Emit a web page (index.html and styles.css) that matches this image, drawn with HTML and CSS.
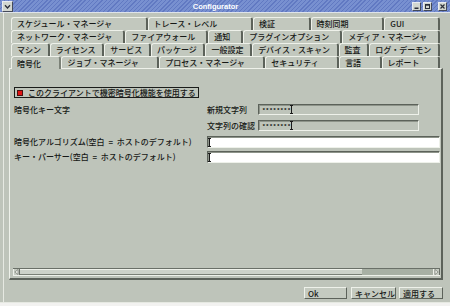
FILE: index.html
```html
<!DOCTYPE html>
<html lang="ja">
<head>
<meta charset="utf-8">
<title>Configurator</title>
<link rel="stylesheet" href="styles.css">
</head>
<body>
<div class="window">
  <div class="titlebar">
    <span class="wbtn menu"><svg width="9" height="9" viewBox="0 0 9 9"><path d="M2 3.2 L4.5 6 L7 3.2" fill="none" stroke="#2a2e3a" stroke-width="1.3"/></svg></span>
    <span class="title">Configurator</span>
    <span class="wbtns">
      <span class="wbtn"><svg width="7" height="7" viewBox="0 0 7 7"><rect x="1.5" y="4.5" width="4" height="1.5" fill="#2a2e3a"/></svg></span>
      <span class="wbtn"><svg width="7" height="7" viewBox="0 0 7 7"><rect x="1.5" y="1.5" width="4" height="4" fill="none" stroke="#2a2e3a" stroke-width="1"/><rect x="1.5" y="1.5" width="4" height="1.2" fill="#2a2e3a"/></svg></span>
      <span class="wbtn close"><svg width="7" height="7" viewBox="0 0 7 7"><path d="M1.5 1.5 L5.5 5.5 M5.5 1.5 L1.5 5.5" stroke="#2a2e3a" stroke-width="1.2"/></svg></span>
    </span>
  </div>

  <div class="frame">
    <div class="notebook">
      <div class="tabrow">
        <div class="tab">スケジュール・マネージャ</div>
        <div class="tab">トレース・レベル</div>
        <div class="tab">検証</div>
        <div class="tab">時刻同期</div>
        <div class="tab">GUI</div>
      </div>
      <div class="tabrow">
        <div class="tab">ネットワーク・マネージャ</div>
        <div class="tab">ファイアウォール</div>
        <div class="tab">通知</div>
        <div class="tab">プラグインオプション</div>
        <div class="tab">メディア・マネージャ</div>
      </div>
      <div class="tabrow">
        <div class="tab">マシン</div>
        <div class="tab">ライセンス</div>
        <div class="tab">サービス</div>
        <div class="tab">パッケージ</div>
        <div class="tab">一般設定</div>
        <div class="tab">デバイス・スキャン</div>
        <div class="tab">監査</div>
        <div class="tab">ログ・デーモン</div>
      </div>
      <div class="tabrow last">
        <div class="tab selected">暗号化</div>
        <div class="tab">ジョブ・マネージャ</div>
        <div class="tab">プロセス・マネージャ</div>
        <div class="tab">セキュリティ</div>
        <div class="tab">言語</div>
        <div class="tab">レポート</div>
      </div>

      <div class="panel">
        <div class="form">
          <label class="check"><span class="box"></span>このクライアントで機密暗号化機能を使用する</label>

          <span class="lbl">暗号化キー文字</span>
          <span class="lbl">新規文字列</span>
          <span class="field pw"><span class="dots">********</span><i class="caret"></i></span>

          <span class="lbl col2">文字列の確認</span>
          <span class="field pw"><span class="dots">********</span><i class="caret"></i></span>

          <span class="lbl tall">暗号化アルゴリズム(空白 = ホストのデフォルト)</span>
          <span class="field text"><i class="caret"></i></span>

          <span class="lbl tall">キー・パーサー(空白 = ホストのデフォルト)</span>
          <span class="field text"><i class="caret"></i></span>
        </div>

        <div class="hscroll">
          <span class="arrow"><svg width="5" height="6" viewBox="0 0 5 6"><path d="M4 0.5 L0.8 3 L4 5.5 Z" fill="#eef1ea" stroke="#646a62" stroke-width="0.6"/></svg></span>
          <span class="thumb"></span>
          <span class="trough"></span>
          <span class="arrow"><svg width="5" height="6" viewBox="0 0 5 6"><path d="M1 0.5 L4.2 3 L1 5.5 Z" fill="#eef1ea" stroke="#646a62" stroke-width="0.6"/></svg></span>
        </div>
      </div>
    </div>

    <div class="actions">
      <button class="btn ok">Ok</button>
      <button class="btn cancel">キャンセル</button>
      <button class="btn apply">適用する</button>
    </div>
  </div>
</div>
</body>
</html>
```

FILE: styles.css
```css
html, body {
  margin: 0; padding: 0;
}

body {
  width: 450px; height: 306px;
  overflow: hidden;
  background: #f2f2f0;
  font-family: "Noto Sans CJK JP", "DejaVu Sans", sans-serif;
  font-size: 8px;
  font-weight: 500;
  color: #161816;
}

.window {
  height: 303px;
  display: flex;
  flex-direction: column;
  background: #bec4ba;
  border-bottom: 1px solid #e6e9e2;
  box-sizing: border-box;
}

/* title bar */

.titlebar {
  height: 12px;
  flex: none;
  display: flex;
  align-items: center;
  background: repeating-linear-gradient(135deg, #6179c2 0 1px, #7890d0 1px 3px);
  border-bottom: 1px solid #dfe4ea;
}

.title {
  flex: 1;
  text-align: center;
  color: #fff;
  font-family: "Liberation Sans", sans-serif;
  font-weight: bold;
  font-size: 7.5px;
  padding-left: 6px;
}

.wbtns {
  display: flex;
  gap: 2px;
  margin-right: 3px;
}

.wbtn {
  width: 7px; height: 7px;
  display: flex;
  background: #d2d6d0;
  border: 1px solid #e8ebf2;
  border-right-color: #444a5a;
  border-bottom-color: #444a5a;
}

.wbtn.menu {
  width: 9px; height: 9px;
  margin-left: 2px;
}

.wbtn.close {
  margin-left: 4px;
}

/* body frame */

.frame {
  flex: 1;
  display: flex;
  flex-direction: column;
  margin-left: 3px;
  border-left: 1px solid #e6e9e2;
  padding: 4px 7px 0 5px;
}

/* notebook tabs */

.tabrow {
  display: flex;
  height: 13px;
  margin: 0 3px 0 2px;
}

.tabrow.last {
  height: 12px;
}

.tab {
  flex: 1 1 auto;
  box-sizing: border-box;
  white-space: nowrap;
  padding: 1px 4px 0 5px;
  line-height: 10px;
  border-top: 1px solid #eef1ea;
  border-left: 1px solid #eef1ea;
  border-right: 2px solid #5c625a;
  border-radius: 3px 3px 0 0;
  background: #c2c8be;
}

.tab.selected {
  background: #bec4ba;
  border-right-color: #7c8278;
  position: relative;
  z-index: 1;
  margin-bottom: -1px;
  padding-top: 2px;
}

/* page */

.panel {
  height: 212px;
  box-sizing: border-box;
  display: flex;
  flex-direction: column;
  border-top: 1px solid #eef1ea;
  border-left: 1px solid #eef1ea;
  border-right: 2px solid #5c625a;
  border-bottom: 2px solid #5c625a;
  padding: 18px 1px 2px 2px;
}

.form {
  display: grid;
  grid-template-columns: 193px 51px 161px 21px;
  grid-template-rows: 17px 16px 16px 15px 12px;
  align-items: start;
  margin-left: 2px;
}

.check {
  grid-column: 1 / -1;
  justify-self: start;
  display: flex;
  align-items: center;
  height: 11px;
  box-sizing: border-box;
  border: 1px solid #1a1c1a;
  padding: 0 2px;
  line-height: 9px;
}

.box {
  width: 4px; height: 4px;
  background: #e01414;
  border: 1px solid #4a1010;
  margin-right: 5px;
}

.lbl {
  line-height: 11px;
  white-space: nowrap;
}

.lbl.tall {
  grid-column: 1;
  line-height: 12px;
  word-spacing: 2px;
}

.lbl.col2 {
  grid-column: 2;
}

.field {
  display: flex;
  align-items: center;
  box-sizing: border-box;
  border: 1px solid #5c625a;
  border-right-color: #eef1ea;
  border-bottom-color: #eef1ea;
  box-shadow: inset 1px 1px 0 #8e948a;
}

.field.pw {
  grid-column: 3;
  height: 11px;
  padding-left: 3px;
}

.field.text {
  grid-column: 2 / 5;
  height: 12px;
  background: #fff;
  padding-left: 1px;
}

.dots {
  font-family: "Liberation Mono", monospace;
  font-weight: bold;
  font-size: 6px;
  line-height: 7px;
  padding-top: 2px;
  color: #101210;
}

.caret {
  display: block;
  width: 1px; height: 9px;
  background: #1a1a1a;
  position: relative;
}

.caret::before,
.caret::after {
  content: "";
  position: absolute;
  left: -1px;
  width: 3px; height: 1px;
  background: #1a1a1a;
}
.caret::before { top: 0; }
.caret::after { bottom: 0; }

/* horizontal scrollbar */

.hscroll {
  margin-top: auto;
  margin-left: 1px;
  height: 8px;
  display: flex;
  box-sizing: border-box;
  border-top: 1px solid #6a7068;
  border-bottom: 1px solid #eef1ea;
  background: #a8b0a4;
}

.arrow {
  width: 7px;
  display: flex;
  align-items: center;
  justify-content: center;
  background: #c6ccc2;
  border-left: 1px solid #eef1ea;
  border-right: 1px solid #6a7068;
  box-sizing: border-box;
}

.thumb {
  width: 342px;
  background: #cdd2c9;
  border-top: 1px solid #eef1ea;
  border-bottom: 1px solid #7a8076;
  box-sizing: border-box;
}

.trough {
  flex: 1;
}

/* dialog buttons */

.actions {
  display: flex;
  justify-content: flex-end;
  margin-top: 7px;
}

.btn {
  height: 12px;
  box-sizing: border-box;
  margin: 0 0 0 4px;
  padding: 0 0 0 3px;
  text-align: left;
  font: inherit;
  line-height: 9px;
  color: #161816;
  background: #c4cac0;
  border: 1px solid #eef1ea;
  border-right-color: #5c625a;
  border-bottom-color: #5c625a;
}

.btn.ok { width: 43px; }
.btn.cancel { width: 45px; }
.btn.apply { width: 44px; margin-left: 3px; }
```
